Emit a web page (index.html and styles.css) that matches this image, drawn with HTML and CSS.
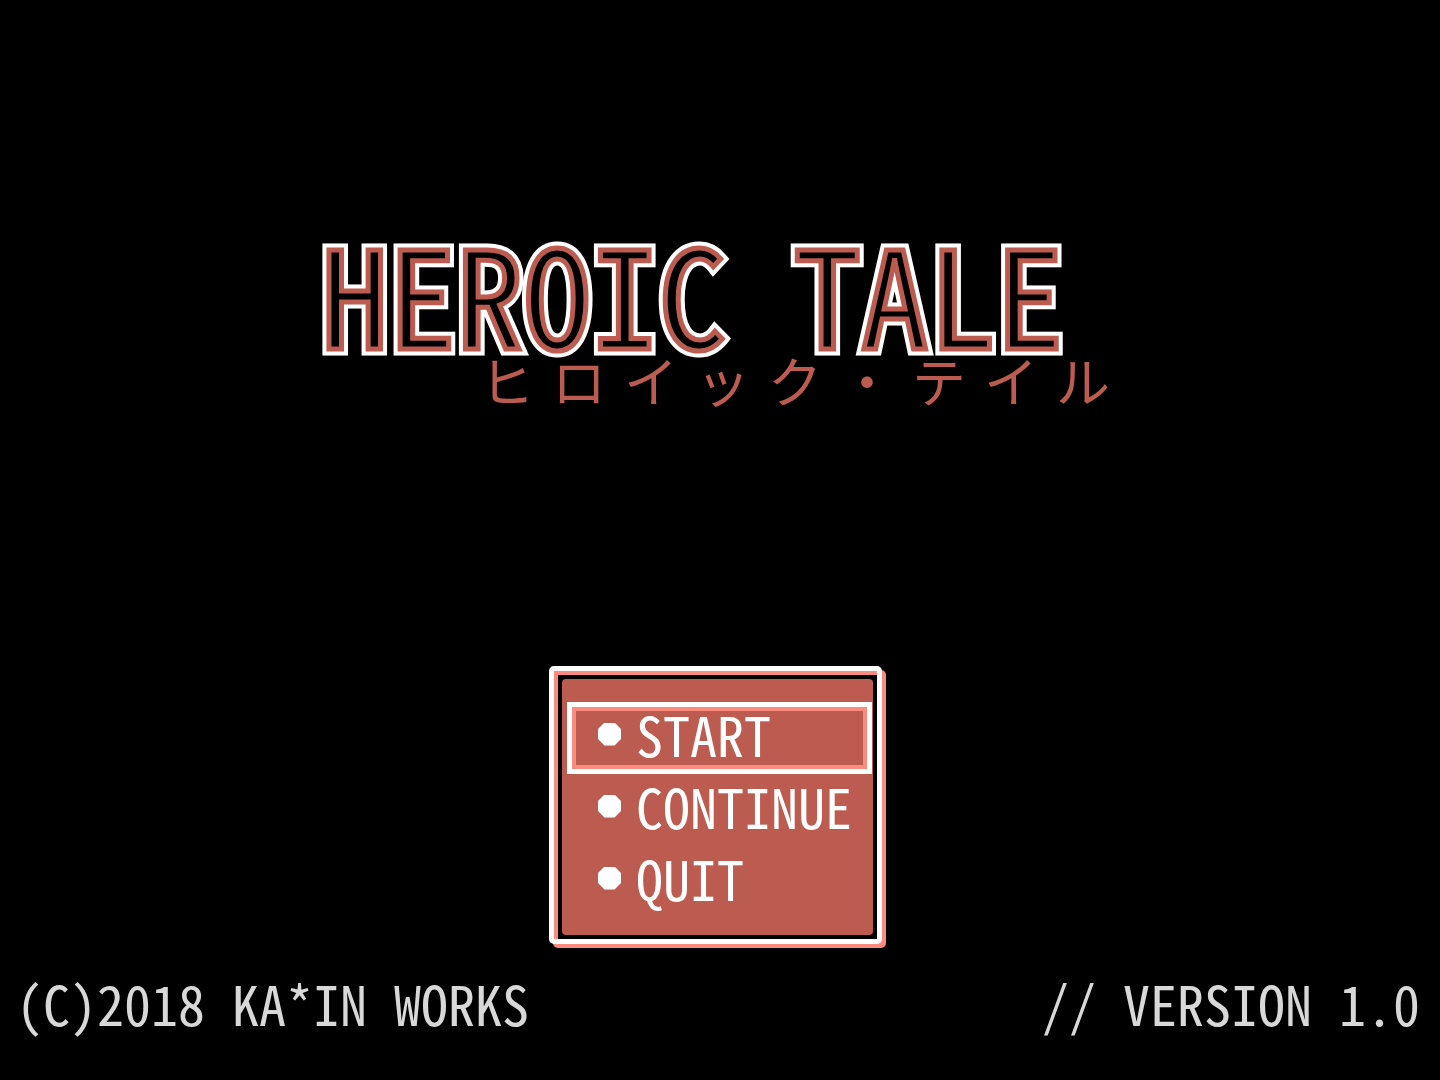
FILE: index.html
```html
<!DOCTYPE html>
<html lang="en">
<head>
<meta charset="utf-8">
<meta name="viewport" content="width=device-width, initial-scale=1">
<title>Heroic Tale</title>
<link rel="stylesheet" href="styles.css">
</head>
<body>
<main class="screen">
  <header class="logo">
    <h1 class="logo-title" data-text="HEROIC TALE">HEROIC TALE</h1>
    <p class="logo-kana" lang="ja"><span>ヒ</span><span>ロ</span><span>イ</span><span>ッ</span><span>ク</span><span>・</span><span>テ</span><span>イ</span><span>ル</span></p>
  </header>
  <nav class="window">
    <div class="menu">
      <button class="item selected" type="button"><span class="bullet"></span>START</button>
      <button class="item" type="button"><span class="bullet"></span>CONTINUE</button>
      <button class="item" type="button"><span class="bullet"></span>QUIT</button>
    </div>
  </nav>
  <footer class="credits">
    <span>(C)2018 KA*IN WORKS</span>
    <span>// VERSION 1.0</span>
  </footer>
</main>
</body>
</html>
```
FILE: styles.css
```css
:root {
  --white: #ffffff;
  --pink: #fb8b7e;
  --red: #bc5c50;
  --grey: #d8d8d8;
}

* {
  box-sizing: border-box;
}

body {
  margin: 0;
  background: #000;
  color: var(--white);
  font-family: "Noto Sans CJK JP", "Liberation Mono", monospace;
  font-size: 54px;
  line-height: 72px;
  font-feature-settings: "hwid" 1;
}

.screen {
  min-height: 100vh;
  display: flex;
  flex-direction: column;
  align-items: center;
  padding: 218px 0 41px;
}

.logo {
  width: 798px;
  max-width: 100%;
}

.logo-title {
  position: relative;
  z-index: 0;
  margin: 0;
  font-size: 135px;
  font-weight: 400;
  line-height: 144px;
  white-space: nowrap;
  color: #000;
  -webkit-text-stroke: 5px var(--red);
}

/* White outer contour behind the lettering */
.logo-title::before {
  content: attr(data-text);
  position: absolute;
  inset: 0;
  z-index: -1;
  color: var(--white);
  -webkit-text-stroke: 13px var(--white);
}

.logo-kana {
  display: flex;
  justify-content: flex-end;
  gap: 18px;
  margin: 0;
  padding-right: 9px;
  line-height: 36px;
  font-weight: 400;
  color: var(--red);
  font-feature-settings: normal;
}

.window {
  width: 333px;
  margin-top: auto;
  margin-right: 9px;
  padding: 8px 4px 4px 8px;
  border: 5px solid var(--white);
  border-radius: 5px;
  background: #000;
  box-shadow: 4px 4px 0 var(--pink), inset 4px 4px 0 var(--pink);
}

.menu {
  display: flex;
  flex-direction: column;
  padding: 23px 1px 17px 5px;
  border-radius: 4px;
  background: var(--red);
}

.item {
  display: flex;
  align-items: center;
  gap: 15px;
  height: 72px;
  padding: 0 0 8px 26px;
  border: 5px solid transparent;
  background: none;
  color: inherit;
  font: inherit;
  font-feature-settings: inherit;
  text-align: left;
  white-space: nowrap;
}

.item.selected {
  border-color: var(--white);
  box-shadow: inset 0 0 0 4px var(--pink);
}

/* Octagonal disc */
.bullet {
  flex: none;
  width: 23px;
  height: 23px;
  background: var(--white);
  clip-path: polygon(28% 0, 72% 0, 100% 28%, 100% 72%, 72% 100%, 28% 100%, 0 72%, 0 28%);
}

.credits {
  align-self: stretch;
  display: flex;
  justify-content: space-between;
  margin-top: 23px;
  padding: 0 20px 0 16px;
  color: var(--grey);
}
```
